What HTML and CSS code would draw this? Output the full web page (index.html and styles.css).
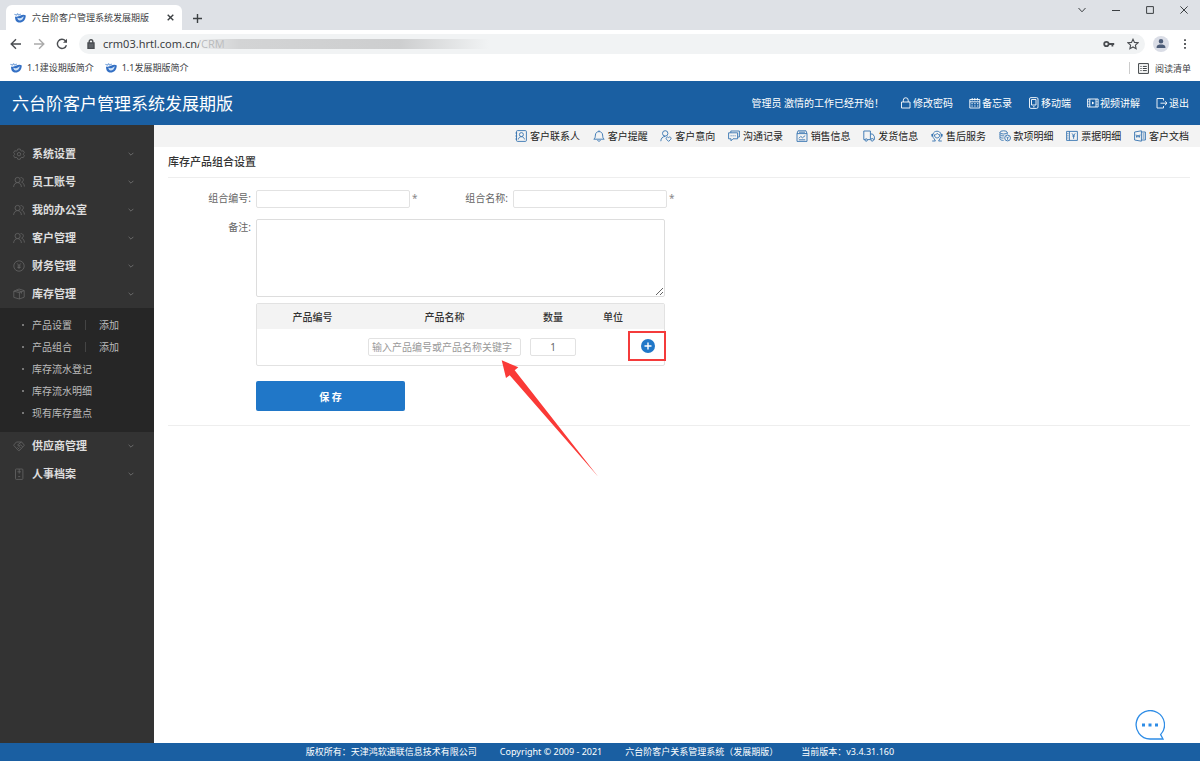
FILE: index.html
```
<!DOCTYPE html>
<html lang="zh-CN">
<head>
	<meta charset="UTF-8">
	<meta name="viewport" content="width=device-width, initial-scale=1">
	<title>六台阶客户管理系统发展期版</title>
	<link rel="stylesheet" href="styles.css">
</head>
<body>
	<svg class="defs" aria-hidden="true">
		<symbol id="logo" viewBox="0 0 12 10">
			<path d="M1 3.5C1 8 3 9.6 5.6 9.6 9 9.6 11.6 7 11.8 2.6 10.6 1.4 8 1.6 6.4 2.6 4.6 3.6 2.6 4.2 1 3.5z" fill="#3470c4"/>
			<path d="M3.2 4.8C5.4 5.8 7.6 5 9.8 3.2 9.4 6 7.6 7.4 5.8 7.4 4.4 7.400 3.600 6.400 3.200 4.800z" fill="#cfe2f7"/>
			<path d="M.4 1.2l2 .9 1.2-1.3 1.2 1.3 2-1.1" fill="none" stroke="#7fa8dc" stroke-width="1.1"/>
		</symbol>
		<symbol id="people" viewBox="0 0 12 12">
			<circle cx="4.6" cy="4" r="2.6"/>
			<path d="M.6 11C.8 8.200 2.400 6.600 4.600 6.600S8.200 8.200 8.400 11M7.600 1.600c3-.4 3.800 3.600 1 4.600 1.600.6 2.800 2 2.800 4.400"/>
		</symbol>
		<symbol id="down" viewBox="0 0 6 4">
			<path d="M.6.8L3 3.2 5.4.8"/>
		</symbol>
	</svg>

	<div class="browser">
		<div class="tabs">
			<div class="tab">
				<svg class="favicon"><use href="#logo"/></svg>
				<span>六台阶客户管理系统发展期版</span>
				<button aria-label="关闭标签页"><svg width="7" height="7" viewBox="0 0 7 7"><path d="M.7.7l5.6 5.6M6.3.7L.7 6.3"/></svg></button>
			</div>
			<button class="new-tab" aria-label="新标签页"><svg width="9" height="9" viewBox="0 0 9 9"><path d="M4.5 0v9M0 4.5h9"/></svg></button>
			<div class="win">
				<button aria-label="搜索标签页"><svg width="8" height="10" viewBox="0 0 8 10"><path d="M.5 3L4 6.8 7.5 3"/></svg></button>
				<button aria-label="最小化"><svg width="8" height="10" viewBox="0 0 8 10"><path d="M0 5.5h8"/></svg></button>
				<button aria-label="最大化"><svg width="8" height="10" viewBox="0 0 8 10"><path d="M.6 1.6h6.8v6.8H.6z"/></svg></button>
				<button aria-label="关闭"><svg width="8" height="10" viewBox="0 0 8 10"><path d="M.4 1.4l7.2 7.2M7.6 1.4L.4 8.6"/></svg></button>
			</div>
		</div>
		<div class="toolbar">
			<button aria-label="后退"><svg width="12" height="12" viewBox="0 0 12 12"><path d="M11 6H1.5M6 1.2L1.2 6 6 10.8"/></svg></button>
			<button class="off" aria-label="前进"><svg width="12" height="12" viewBox="0 0 12 12"><path d="M1 6h9.5M6 1.2L10.8 6 6 10.8"/></svg></button>
			<button aria-label="刷新"><svg width="12" height="12" viewBox="0 0 12 12"><path d="M10.4 7.2A4.6 4.6 0 1 1 9.4 2.8L10.6 4"/><path d="M11 .8v4H7z" fill="#4a4d51" stroke="none"/></svg></button>
			<div class="address">
				<svg class="lock" width="8" height="10" viewBox="0 0 8 10"><path d="M1 4h6v5.400H1z" fill="#5f6368"/><path d="M2.200 4V2.600a1.800 1.800 0 0 1 3.600 0V4"/></svg>
				<input type="text" aria-label="地址" value="crm03.hrtl.com.cn/CRM">
				<span class="smudge"></span>
				<button aria-label="密码"><svg width="12" height="8" viewBox="0 0 12 8"><circle cx="3.4" cy="4" r="2.2" stroke-width="1.8"/><path d="M5.6 4h5.6M9.4 4v2.4" stroke-width="1.8"/></svg></button>
				<button aria-label="收藏"><svg width="12" height="12" viewBox="0 0 12 12"><path stroke-width="1.100" d="M6 1.200l1.500 3.200 3.500.4-2.600 2.400.7 3.500L6 8.900l-3.100 1.800.7-3.500L1 4.800l3.500-.4z"/></svg></button>
			</div>
			<button class="avatar" aria-label="用户"><svg width="10" height="10" viewBox="0 0 10 10"><path d="M5 0a2.300 2.300 0 1 1 0 4.600A2.300 2.300 0 0 1 5 0zM.6 9V8C.6 6.200 3 5.600 5 5.600s4.400.6 4.400 2.400V9z" fill="#4d5d78" stroke="none"/></svg></button>
			<button aria-label="菜单"><svg width="4" height="12" viewBox="0 0 4 12"><path d="M1.100 1.200h1.800v1.800H1.100zM1.100 5.100h1.800v1.800H1.100zM1.100 9h1.800v1.800H1.100z" fill="#4a4d51" stroke="none"/></svg></button>
		</div>
		<div class="bookmarks">
			<a href="#"><svg class="favicon"><use href="#logo"/></svg>1.1建设期版简介</a>
			<a href="#"><svg class="favicon"><use href="#logo"/></svg>1.1发展期版简介</a>
			<button class="reading"><svg width="11" height="11" viewBox="0 0 11 11"><path d="M.6.6h9.800v9.800H.6zM2.400 3.400h1.200M4.800 3.400h4M2.400 5.500h1.200M4.800 5.500h4M2.400 7.600h1.200M4.800 7.600h4"/></svg>阅读清单</button>
		</div>
	</div>

	<header class="header">
		<h1>六台阶客户管理系统发展期版</h1>
		<span class="hello">管理员 激情的工作已经开始！</span>
		<nav>
			<a href="#"><svg viewBox="0 0 12 12"><path d="M1.500 5h8.500v6H1.500zM3.300 5V3.200a2.400 2.400 0 0 1 4.900 0V5"/></svg>修改密码</a>
			<a href="#"><svg viewBox="0 0 12 12"><path d="M.8 2.500h10V11H.8zM.8 4.800h10M3.200 1v2.500M5.800 1v2.500M8.400 1v2.500"/><path d="M2.400 6.700h7M2.400 9h7" stroke-dasharray="1.400 1.400"/></svg>备忘录</a>
			<a href="#"><svg viewBox="0 0 12 12"><rect x="1.500" y=".6" width="8.500" height="10.800" rx="1.400"/><path d="M3.500 2.500h4.500v5.500H3.500zM5 9.800h1.600"/></svg>移动端</a>
			<a href="#"><svg viewBox="0 0 12 12"><path d="M.6 2h10.500v8H.6zM2.800 2v8M9 2v8"/><path d="M.6 4.700h2M.6 7.300h2M9 4.700h2M9 7.300h2" stroke-width=".5"/><path d="M5 4.400L7.400 6 5 7.600z" fill="#fff" stroke="none"/></svg>视频讲解</a>
			<a href="#"><svg viewBox="0 0 12 12"><path d="M7.500 3.500v-2H1v9.500h6.500V9M4.500 6.200h6.500M8.900 4.200L11 6.200 8.900 8.200"/></svg>退出</a>
		</nav>
	</header>

	<div class="body">
		<aside class="side">
			<a class="item" href="#"><svg class="ico" viewBox="0 0 12 12"><path d="M4.800 1h2.400l.4 1.400 1.200.7 1.400-.4 1.200 2-1 1.100v.8l1 1.100-1.200 2-1.400-.4-1.200.7-.4 1.300H4.800l-.4-1.300-1.200-.7-1.400.4-1.200-2 1-1.100v-.8l-1-1.100 1.200-2 1.400.4 1.200-.7z"/><circle cx="6" cy="6.200" r="1.700"/></svg>系统设置<svg class="arrow"><use href="#down"/></svg></a>
			<a class="item" href="#"><svg class="ico"><use href="#people"/></svg>员工账号<svg class="arrow"><use href="#down"/></svg></a>
			<a class="item" href="#"><svg class="ico"><use href="#people"/></svg>我的办公室<svg class="arrow"><use href="#down"/></svg></a>
			<a class="item" href="#"><svg class="ico"><use href="#people"/></svg>客户管理<svg class="arrow"><use href="#down"/></svg></a>
			<a class="item" href="#"><svg class="ico" viewBox="0 0 12 12"><circle cx="6" cy="6" r="5.200"/><path d="M4.200 3.400L6 5.600l1.800-2.200M6 5.600v3.400M4.400 6h3.200M4.400 7.500h3.200"/></svg>财务管理<svg class="arrow"><use href="#down"/></svg></a>
			<a class="item" href="#"><svg class="ico" viewBox="0 0 12 12"><path d="M.8 3.200L6 1l5.200 1.600v6.600L6.400 11 .8 9.400zM.8 3.200l5.600 1.400 4.800-2M6.400 4.600V11M3.400 2.200l5 1.400v2"/></svg>库存管理<svg class="arrow"><use href="#down"/></svg></a>
			<ul class="sub">
				<li><a href="#">产品设置</a><a class="add" href="#">添加</a></li>
				<li><a href="#">产品组合</a><a class="add" href="#">添加</a></li>
				<li><a href="#">库存流水登记</a></li>
				<li><a href="#">库存流水明细</a></li>
				<li><a href="#">现有库存盘点</a></li>
			</ul>
			<a class="item" href="#"><svg class="ico" viewBox="0 0 12 12"><path d="M3.400 2h5.200l2.800 3.200L6.400 10.600h-1L.6 5.200zM8.400 2L4.600 5c.8 1.200 2 .8 3-.2l2 2M4.400 7.400l2 2M5.800 6.200l2 2"/></svg>供应商管理<svg class="arrow"><use href="#down"/></svg></a>
			<a class="item" href="#"><svg class="ico" viewBox="0 0 12 12"><rect x="2.500" y="1" width="7.400" height="10.400" rx=".8"/><path d="M4.400 3.800h3.600M6.200 1v4.600M5.200 8.600h2"/></svg>人事档案<svg class="arrow"><use href="#down"/></svg></a>
		</aside>

		<main class="main">
			<div class="quick">
				<nav>
					<a href="#"><svg viewBox="0 0 12 12"><rect x="1.500" y=".6" width="9.900" height="10.800" rx="1"/><circle cx="6.400" cy="4.600" r="2"/><path d="M3.400 9.400c.2-3.600 5.800-3.600 6 0M.4 3h1.800M.4 6h1.800M.4 9h1.800"/></svg>客户联系人</a>
					<a href="#"><svg viewBox="0 0 12 12"><path d="M.8 9.200h10.400C9.600 8 9.800 6.800 9.600 5 9.400 2.800 8 1.600 6 1.600S2.600 2.800 2.400 5C2.200 6.800 2.400 8 .8 9.200zM6 .4v1.200M4.500 10.200c.6 1.400 2.400 1.400 3 0"/></svg>客户提醒</a>
					<a href="#"><svg viewBox="0 0 12 12"><circle cx="5.200" cy="3.400" r="2.700"/><path d="M.8 11.200C1 8.200 2.600 6.600 5.200 6.400"/><path d="M8.600 11.400L6.400 9.200C5.400 7.800 7.400 6 8.600 7.600c1.200-1.600 3.200.2 2.200 1.600z"/></svg>客户意向</a>
					<a href="#"><svg viewBox="0 0 12 12"><path d="M2.800 2.600V1h8.600v6h-1.400M.6 2.800h9v6H5l-2 2v-2H.6zM2.600 5.800h1M4.600 5.800h1M6.600 5.800h1"/></svg>沟通记录</a>
					<a href="#"><svg viewBox="0 0 12 12"><path d="M1 3.600h10v7.800H1zM1 3.600L2 .8h8l1 2.800M3 2.200h6M2.800 8.400l2-2 1.600 1.400 2.800-2.200M2.800 9.800h6.400"/></svg>销售信息</a>
					<a href="#"><svg viewBox="0 0 12 12"><path d="M2 9.600H.8V1h6.600v8.600H4.400M7.400 4h2.200l1.800 2.600v3h-.6"/><circle cx="3.200" cy="10" r="1.200"/><circle cx="9.200" cy="9.800" r="1.300"/></svg>发货信息</a>
					<a href="#"><svg viewBox="0 0 12 12"><path d="M1.200 11h3.200L3.200 8.800C.2 6 2 1.200 6 1.200s5.800 4.800 2.800 7.600L7.600 11h3.200M3.400 4.800c1.600 0 2.400-.6 2.800-1.400.6.8 1.400 1.400 2.600 1.400C8.800 9 3.400 9 3.400 4.800z"/><path d="M1.200 4v2.600M10.800 4v2.600" stroke-width="1.600"/></svg>售后服务</a>
					<a href="#"><svg viewBox="0 0 12 12"><ellipse cx="4.600" cy="2.400" rx="3.600" ry="1.600"/><path d="M1 2.400v6.400c0 1 1.600 1.600 3.600 1.600M8.200 2.400v2M1 4.600c.6 1.200 2.600 1.400 4.200 1.200M1 6.800c.6 1.200 2.200 1.400 3.600 1.200"/><circle cx="8.600" cy="8" r="2.900"/><path d="M7.400 6.600L8.600 8l1.200-1.400M8.600 8v1.800"/></svg>款项明细</a>
					<a href="#"><svg viewBox="0 0 12 12"><path d="M.6 1.400h10.800v9H.6zM3.400 1.400v9M1.400 3.600h1M1.400 5.800h1M1.400 8h1M6 3.400l1.600 2 1.600-2M7.600 5.400v3.400M6.200 6h2.800"/></svg>票据明细</a>
					<a href="#"><svg viewBox="0 0 12 12"><path d="M7.400.8L.6 2v8l6.800 1.200zM7.400 2h4v8h-4M8.600 4h1.800M8.600 6h1.800M8.600 8h1.800M2 4.600l.8 2.800L4 5l1.200 2.400.8-2.800"/></svg>客户文档</a>
				</nav>
			</div>
			<div class="page">
				<h2>库存产品组合设置</h2>
				<form onsubmit="return false">
					<div class="row">
						<label for="code">组合编号:</label>
						<input type="text" id="code"><span class="must">*</span>
						<label for="name">组合名称:</label>
						<input type="text" id="name"><span class="must">*</span>
					</div>
					<div class="row">
						<label for="remark">备注:</label>
						<textarea id="remark"></textarea>
					</div>
					<div class="products">
						<table>
							<thead>
								<tr>
									<th class="c-code">产品编号</th>
									<th class="c-name">产品名称</th>
									<th class="c-num">数量</th>
									<th class="c-unit">单位</th>
									<th></th>
								</tr>
							</thead>
							<tbody>
								<tr>
									<td></td>
									<td><input type="text" class="search" aria-label="产品名称" placeholder="输入产品编号或产品名称关键字"></td>
									<td><input type="text" class="num" aria-label="数量" value="1"></td>
									<td></td>
									<td><button type="button" class="plus" aria-label="添加一行"><svg width="14" height="14" viewBox="0 0 14 14"><circle cx="7" cy="7" r="7" fill="#2077c8" stroke="none"/><path d="M7 3.500v7M3.500 7h7" stroke="#fff" stroke-width="1.400"/></svg></button></td>
								</tr>
							</tbody>
						</table>
						<span class="frame"></span>
						<svg class="pointer" width="98" height="118" viewBox="0 0 98 118"><path d="M1.700.3L18.300 7.300 14.700 10.300 98 116.500 9.700 15.300 6 18z" fill="#fa3a37"/></svg>
					</div>
					<button type="submit" class="save">保 存</button>
				</form>
			</div>
		</main>
	</div>

	<footer class="footer">
		<span>版权所有：天津鸿软通联信息技术有限公司</span>
		<span>Copyright © 2009 - 2021</span>
		<span>六台阶客户关系管理系统（发展期版）</span>
		<span>当前版本：v3.4.31.160</span>
	</footer>

	<button class="chat" aria-label="在线客服"><svg width="30" height="30" viewBox="0 0 30 30"><path d="M28 29H15A14.200 14.200 0 1 1 25.600 24.600z" fill="#fff" stroke="#2d8ce6" stroke-width="1.300"/><path d="M7 13.400h3v3H7zM13.500 13.400h3v3h-3zM20 13.400h3v3h-3z" fill="#2d8ce6" stroke="none"/></svg></button>
</body>
</html>
```
FILE: styles.css
```
* {
	margin: 0;
	padding: 0;
	box-sizing: border-box;
}
body {
	display: flex;
	flex-direction: column;
	min-height: 100vh;
	font-family: "Noto Sans", "Noto Sans CJK SC", sans-serif;
	font-size: 10px;
	line-height: 16px;
	color: #333;
	background-color: #fff;
}
a {
	color: inherit;
	text-decoration: none;
}
ul {
	list-style-type: none;
}
button {
	border: none;
	background: none;
	font-family: inherit;
	color: inherit;
}
input, textarea {
	font-family: inherit;
	font-size: 10px;
	color: #666;
	outline: none;
}
svg {
	display: block;
	flex: none;
	fill: none;
	stroke: currentColor;
}
.defs {
	position: absolute;
	width: 0;
	height: 0;
}

/* browser bar */
.browser {
	height: 81px;
	font-size: 9px;
	color: #3c4043;
}
.browser button {
	display: flex;
	align-items: center;
	justify-content: center;
}
.favicon {
	width: 12px;
	height: 10px;
	stroke: none;
}
.tabs {
	display: flex;
	height: 30px;
	padding-left: 6px;
	background-color: #dee1e6;
}
.tab {
	display: flex;
	align-items: center;
	width: 176px;
	height: 25px;
	margin-top: 5px;
	padding: 0 8px;
	border-radius: 6px 6px 0 0;
	background-color: #fff;
}
.tab span {
	flex: 1;
	margin-left: 6px;
	white-space: nowrap;
}
.tab button, .new-tab {
	stroke-width: 1.4;
}
.new-tab {
	width: 30px;
	height: 36px;
}
.win {
	display: flex;
	gap: 26px;
	height: 20px;
	margin-left: auto;
	padding-right: 12px;
}
.toolbar {
	display: flex;
	align-items: center;
	gap: 11px;
	height: 27px;
	padding: 0 13px 0 10px;
	color: #4a4d51;
	stroke-width: 1.4;
}
.toolbar .off {
	color: #aaa;
}
.address {
	position: relative;
	display: flex;
	flex: 1;
	align-items: center;
	gap: 12px;
	height: 20px;
	padding: 0 6px 0 8px;
	border-radius: 10px;
	background-color: #f1f3f4;
}
.address input {
	flex: 1;
	margin-left: -4px;
	border: none;
	font-size: 11px;
	color: #3c4043;
	background: none;
}
.smudge {
	position: absolute;
	left: 120px;
	top: 5px;
	width: 290px;
	height: 10px;
	background: linear-gradient(to right, rgba(241, 243, 244, .7), rgba(216, 217, 218, .8) 20px, #d3d4d5 40px, #cdcecf 200px, #f1f3f4);
}
.toolbar .avatar {
	width: 16px;
	height: 16px;
	margin: 0 3px 0 -3px;
	border-radius: 50%;
	background-color: #dadde6;
}
.bookmarks {
	display: flex;
	align-items: center;
	gap: 11px;
	height: 22px;
	padding: 0 9px 0 10px;
}
.bookmarks a {
	display: flex;
	align-items: center;
	gap: 5px;
}
.browser .reading {
	gap: 6px;
	height: 12px;
	margin-left: auto;
	padding-left: 8px;
	border-left: 1px solid #ccc;
	font-size: 9px;
}

/* blue header */
.header {
	display: flex;
	align-items: center;
	height: 44px;
	padding: 0 11px 0 12px;
	color: #fff;
	background-color: #1a5fa2;
}
.header h1 {
	flex: 1;
	padding-top: 2px;
	font-size: 17px;
	font-weight: 400;
	line-height: 24px;
}
.header nav {
	display: flex;
	gap: 16px;
	margin-left: 16px;
}
.header a {
	display: flex;
	align-items: center;
	gap: 1px;
}
.header a svg {
	width: 12px;
	height: 12px;
	stroke-width: .9;
}

.body {
	display: flex;
	flex: 1;
}

/* left menu */
.side {
	width: 154px;
	padding-top: 15px;
	color: #ddd;
	background-color: #333;
}
.item {
	display: flex;
	align-items: center;
	height: 28px;
	padding: 0 20px 0 13px;
	font-size: 11px;
	font-weight: 700;
}
.ico {
	width: 12px;
	height: 12px;
	margin-right: 7px;
	color: #666;
	stroke-width: .8;
}
.arrow {
	width: 6px;
	height: 4px;
	margin-left: auto;
	color: #777;
	stroke-width: .8;
}
.sub {
	padding: 6px 0 8px;
	color: #bbb;
	background-color: #262626;
}
.sub li {
	display: flex;
	align-items: center;
	height: 22px;
	padding-left: 22px;
}
.sub li::before {
	content: "";
	width: 2px;
	height: 2px;
	margin-right: 8px;
	background-color: #777;
}
.sub .add {
	margin-left: 13px;
	padding-left: 13px;
	border-left: 1px solid #444;
	line-height: 10px;
}

/* right side */
.main {
	flex: 1;
	min-width: 0;
}
.quick {
	display: flex;
	justify-content: flex-end;
	height: 22px;
	padding-right: 11px;
	background-color: #f3f3f3;
}
.quick nav {
	display: flex;
	justify-content: space-between;
	width: 674px;
	color: #222;
}
.quick a {
	display: flex;
	align-items: center;
	gap: 3px;
}
.quick svg {
	width: 12px;
	height: 12px;
	color: #3473b0;
	stroke-width: .9;
}
.page {
	padding: 0 10px 0 14px;
}
.page h2 {
	height: 31px;
	border-bottom: 1px solid #eee;
	font-size: 11px;
	font-weight: 500;
	line-height: 30px;
}
form {
	padding: 12px 0 14px;
	border-bottom: 1px solid #eee;
}
.row {
	display: flex;
	margin-bottom: 11px;
}
.row label {
	width: 88px;
	padding-right: 5px;
	text-align: right;
	color: #666;
}
.row input, .products input {
	height: 18px;
	border: 1px solid #e2e2e2;
	border-radius: 2px;
	padding: 0 3px;
}
.row input {
	width: 154px;
}
.must {
	width: 15px;
	padding-left: 2px;
	color: #888;
}
textarea {
	width: 409px;
	height: 78px;
	border: 1px solid #ddd;
	border-radius: 2px;
}
.products {
	position: relative;
	width: 409px;
	margin: -5px 0 15px 88px;
	border: 1px solid #e2e2e2;
	border-radius: 2px;
}
table {
	width: 100%;
	border-collapse: collapse;
	table-layout: fixed;
}
th {
	height: 25px;
	font-weight: 500;
	background-color: #f3f3f3;
}
td {
	height: 36px;
	text-align: center;
}
.c-code {
	width: 111px;
}
.c-name {
	width: 153px;
}
.c-num {
	width: 64px;
}
.c-unit {
	width: 56px;
}
.products input {
	display: block;
}
.products .search {
	width: 153px;
}
.products .num {
	width: 46px;
	margin: 0 auto;
	text-align: center;
}
.search::placeholder {
	color: #999;
}
.plus {
	display: block;
	padding-bottom: 2px;
}
.frame {
	position: absolute;
	right: -2px;
	top: 27px;
	width: 38px;
	height: 30px;
	border: 2px solid #f43b3b;
	pointer-events: none;
}
.pointer {
	position: absolute;
	left: 243px;
	top: 56px;
	stroke: none;
	pointer-events: none;
}
.save {
	display: block;
	width: 149px;
	height: 30px;
	margin-left: 88px;
	border-radius: 2px;
	font-size: 10px;
	font-weight: 700;
	color: #fff;
	background-color: #2077c8;
}

.footer {
	display: flex;
	justify-content: center;
	gap: 23px;
	height: 18px;
	font-size: 9px;
	line-height: 18px;
	color: #fff;
	background-color: #1a5fa2;
}
.chat {
	position: fixed;
	right: 35px;
	bottom: 21px;
}
```
